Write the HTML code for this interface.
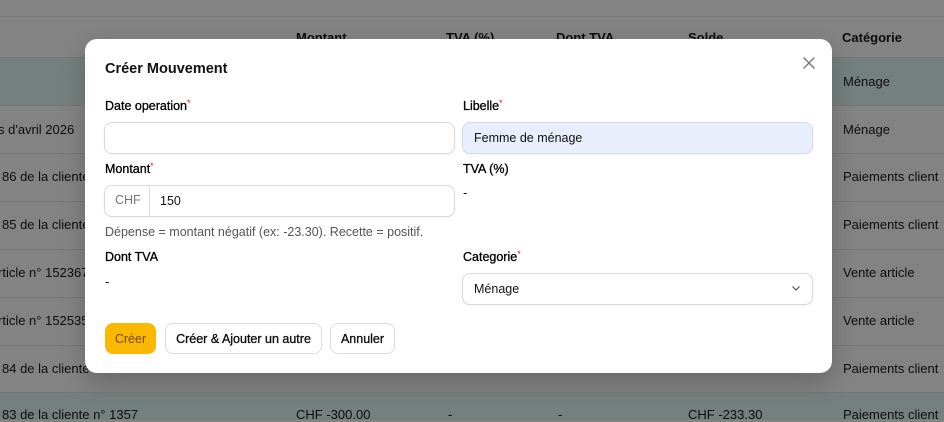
<!DOCTYPE html>
<html><head><meta charset="utf-8"><style>
*{box-sizing:border-box;margin:0;padding:0}
body{width:944px;height:420px;overflow:hidden;background:#838383;font-family:"Liberation Sans",sans-serif;position:relative;color:#111}
.line{position:absolute;left:0;width:944px;height:1px;background:#777}
.hl{position:absolute;left:0;width:944px;background:#74807d}
.t{position:absolute;font-size:13px;color:#0d0d0d;white-space:nowrap}
.h{font-weight:bold}
.modal{position:absolute;left:85px;top:39px;width:747px;height:334px;background:#fff;border-radius:12px;box-shadow:0 10px 25px rgba(0,0,0,.2)}
.m{position:absolute;font-size:13px;color:#111;white-space:nowrap}
.lbl{font-size:12.5px;color:#000;-webkit-text-stroke:0.3px #000}
.lbl sup{color:#e11;font-size:9px;position:relative;top:-1px;vertical-align:top;-webkit-text-stroke:0}
.in{position:absolute;height:32px;border:1px solid #d9d9d9;border-radius:8px;background:#fff;box-shadow:0 1px 2px rgba(0,0,0,.05)}
.btn{position:absolute;top:284px;height:31px;border:1px solid #ddd;border-radius:8px;font-size:12.5px;display:flex;align-items:center;justify-content:center;background:#fff;-webkit-text-stroke:0.3px #000}
</style></head><body>
<div class="hl" style="top:58px;height:47px"></div>
<div class="hl" style="top:393px;height:27px"></div>
<div class="line" style="top:16px"></div>
<div class="line" style="top:57px"></div>
<div class="line" style="top:105px"></div>
<div class="line" style="top:153px"></div>
<div class="line" style="top:201px"></div>
<div class="line" style="top:249px"></div>
<div class="line" style="top:297px"></div>
<div class="line" style="top:345px"></div>
<div class="line" style="top:392px"></div>
<div class="t h" style="left:296px;top:30px">Montant</div>
<div class="t h" style="left:446px;top:30px">TVA (%)</div>
<div class="t h" style="left:556px;top:30px">Dont TVA</div>
<div class="t h" style="left:688px;top:30px">Solde</div>
<div class="t h" style="left:842px;top:30px">Catégorie</div>
<div class="t" style="left:843px;top:74px">Ménage</div>
<div class="t" style="left:-2px;top:122px">s d'avril 2026</div><div class="t" style="left:843px;top:122px">Ménage</div>
<div class="t" style="left:2px;top:169px">86 de la cliente</div><div class="t" style="left:843px;top:169px">Paiements client</div>
<div class="t" style="left:2px;top:217px">85 de la cliente</div><div class="t" style="left:843px;top:217px">Paiements client</div>
<div class="t" style="left:-2px;top:265px">rticle n° 152367</div><div class="t" style="left:843px;top:265px">Vente article</div>
<div class="t" style="left:-2px;top:313px">rticle n° 152535</div><div class="t" style="left:843px;top:313px">Vente article</div>
<div class="t" style="left:2px;top:361px">84 de la cliente</div><div class="t" style="left:843px;top:361px">Paiements client</div>
<div class="t" style="left:2px;top:407px">83 de la cliente n° 1357</div>
<div class="t" style="left:296px;top:407px">CHF -300.00</div>
<div class="t" style="left:448px;top:407px">-</div><div class="t" style="left:558px;top:407px">-</div>
<div class="t" style="left:688px;top:407px">CHF -233.30</div>
<div class="t" style="left:843px;top:407px">Paiements client</div>

<div class="modal">
<div class="m" style="left:20px;top:22px;font-size:14.5px;font-weight:bold">Créer Mouvement</div>
<svg style="position:absolute;left:717px;top:17px" width="14" height="14" viewBox="0 0 14 14"><path d="M1.5 1.5L12.5 12.5M12.5 1.5L1.5 12.5" stroke="#777" stroke-width="1.4" fill="none"/></svg>
<div class="m lbl" style="left:20px;top:60px">Date operation<sup>*</sup></div>
<div class="m lbl" style="left:378px;top:60px">Libelle<sup>*</sup></div>
<div class="in" style="left:19px;top:83px;width:351px"></div>
<div class="in" style="left:377px;top:83px;width:351px;background:#e8eefb;border-color:#d5dbe6"></div>
<div class="m" style="left:389px;top:92px;font-size:12.5px">Femme de ménage</div>
<div class="m lbl" style="left:20px;top:123px">Montant<sup>*</sup></div>
<div class="m lbl" style="left:378px;top:123px">TVA (%)</div>
<div class="m" style="left:378px;top:146px">-</div>
<div class="in" style="left:19px;top:146px;width:351px"><div style="position:absolute;left:44px;top:0;width:1px;height:30px;background:#ddd"></div></div>
<div class="m" style="left:30px;top:154px;color:#777;font-size:12.5px">CHF</div>
<div class="m" style="left:75px;top:155px;font-size:12.5px">150</div>
<div class="m" style="left:20px;top:186px;color:#555;font-size:12.5px">Dépense = montant négatif (ex: -23.30). Recette = positif.</div>
<div class="m lbl" style="left:20px;top:211px">Dont TVA</div>
<div class="m" style="left:20px;top:235px">-</div>
<div class="m lbl" style="left:378px;top:211px">Categorie<sup>*</sup></div>
<div class="in" style="left:377px;top:234px;width:351px"></div>
<div class="m" style="left:389px;top:243px;font-size:12.5px">Ménage</div>
<svg style="position:absolute;left:706px;top:245px" width="10" height="8" viewBox="0 0 10 8"><path d="M1.5 2.5L5 6L8.5 2.5" stroke="#555" stroke-width="1.2" fill="none"/></svg>
<div class="btn" style="left:20px;width:51px;background:#fbb800;border-color:#fbb800;color:#7a4a00;-webkit-text-stroke:0">Créer</div>
<div class="btn" style="left:80px;width:157px">Créer &amp; Ajouter un autre</div>
<div class="btn" style="left:245px;width:65px">Annuler</div>
</div>
</body></html>
